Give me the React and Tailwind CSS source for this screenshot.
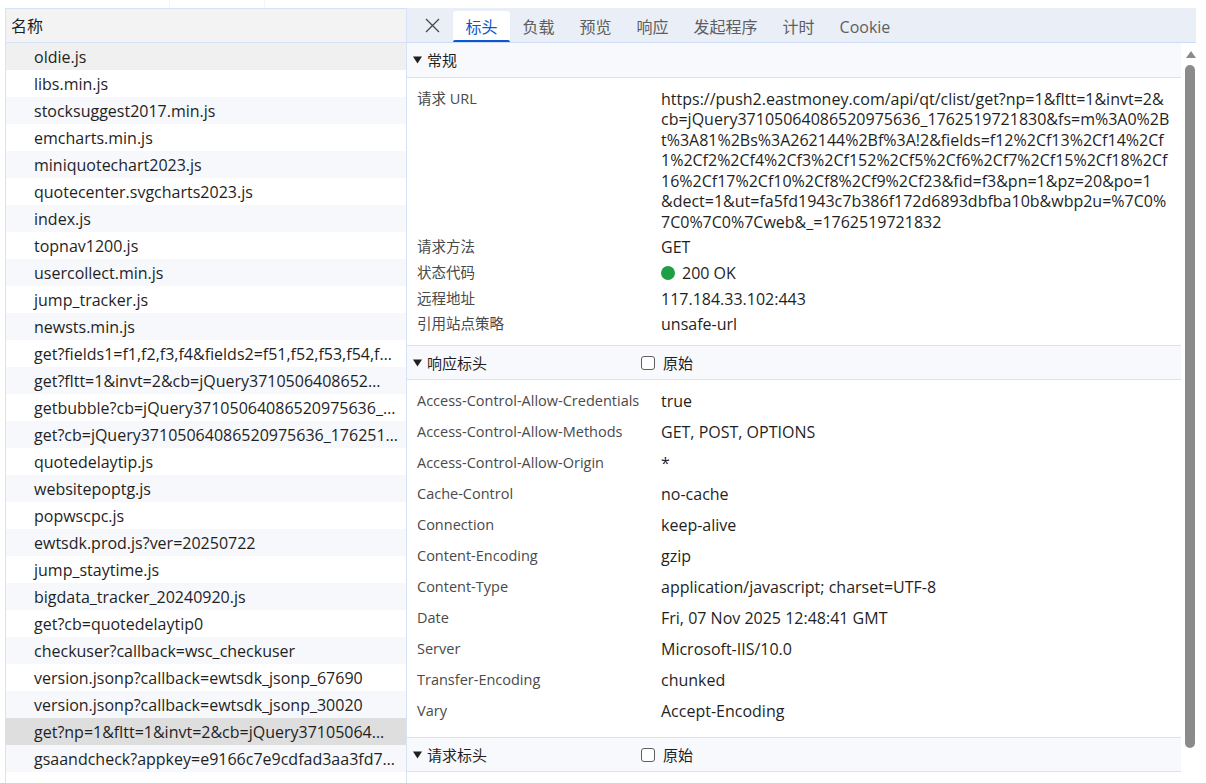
const files = [
  "oldie.js",
  "libs.min.js",
  "stocksuggest2017.min.js",
  "emcharts.min.js",
  "miniquotechart2023.js",
  "quotecenter.svgcharts2023.js",
  "index.js",
  "topnav1200.js",
  "usercollect.min.js",
  "jump_tracker.js",
  "newsts.min.js",
  "get?fields1=f1,f2,f3,f4&fields2=f51,f52,f53,f54,f…",
  "get?fltt=1&invt=2&cb=jQuery3710506408652…",
  "getbubble?cb=jQuery37105064086520975636_…",
  "get?cb=jQuery37105064086520975636_176251…",
  "quotedelaytip.js",
  "websitepoptg.js",
  "popwscpc.js",
  "ewtsdk.prod.js?ver=20250722",
  "jump_staytime.js",
  "bigdata_tracker_20240920.js",
  "get?cb=quotedelaytip0",
  "checkuser?callback=wsc_checkuser",
  "version.jsonp?callback=ewtsdk_jsonp_67690",
  "version.jsonp?callback=ewtsdk_jsonp_30020",
  "get?np=1&fltt=1&invt=2&cb=jQuery37105064…",
  "gsaandcheck?appkey=e9166c7e9cdfad3aa3fd7…",
];

const urlLines = [
  "https://push2.eastmoney.com/api/qt/clist/get?np=1&fltt=1&invt=2&",
  "cb=jQuery37105064086520975636_1762519721830&fs=m%3A0%2B",
  "t%3A81%2Bs%3A262144%2Bf%3A!2&fields=f12%2Cf13%2Cf14%2Cf",
  "1%2Cf2%2Cf4%2Cf3%2Cf152%2Cf5%2Cf6%2Cf7%2Cf15%2Cf18%2Cf",
  "16%2Cf17%2Cf10%2Cf8%2Cf9%2Cf23&fid=f3&pn=1&pz=20&po=1",
  "&dect=1&ut=fa5fd1943c7b386f172d6893dbfba10b&wbp2u=%7C0%",
  "7C0%7C0%7Cweb&_=1762519721832",
];

const respHeaders = [
  ["Access-Control-Allow-Credentials", "true"],
  ["Access-Control-Allow-Methods", "GET, POST, OPTIONS"],
  ["Access-Control-Allow-Origin", "*"],
  ["Cache-Control", "no-cache"],
  ["Connection", "keep-alive"],
  ["Content-Encoding", "gzip"],
  ["Content-Type", "application/javascript; charset=UTF-8"],
  ["Date", "Fri, 07 Nov 2025 12:48:41 GMT"],
  ["Server", "Microsoft-IIS/10.0"],
  ["Transfer-Encoding", "chunked"],
  ["Vary", "Accept-Encoding"],
];

const tabs = ["负载", "预览", "响应", "发起程序", "计时", "Cookie"];

function Tri() {
  return (
    <svg width="9" height="8" viewBox="0 0 9 8" className="shrink-0">
      <polygon points="0,0.5 9,0.5 4.5,7.5" fill="#1f1f1f" />
    </svg>
  );
}

function SectionHeader({ title, raw, top }) {
  return (
    <div
      className={
        "h-[35px] shrink-0 bg-[#f8f9fd] border-b border-[#d6e2f8] flex items-center pl-[6px] text-[15px] text-[#1f1f1f] " +
        (top ? "border-t" : "")
      }
    >
      <div className="w-[228px] flex items-center gap-[5px]">
        <Tri />
        <span>{title}</span>
      </div>
      {raw && (
        <div className="flex items-center gap-[8px]">
          <div className="w-[14px] h-[14px] shrink-0 border border-[#5f5f5f] rounded-[3px] bg-white" />
          <span>原始</span>
        </div>
      )}
    </div>
  );
}

export default function App() {
  return (
    <div className="w-[1206px] h-[783px] bg-white overflow-hidden flex flex-col font-['Open_Sans','Noto_Sans_CJK_SC',sans-serif] text-[#1f1f1f]">
      <div className="h-[8px] shrink-0 flex">
        <div className="w-[5px]" />
        <div className="w-[165px] border-r border-[#f3f6fc]" />
        <div className="w-[95px] border-r border-[#f3f6fc]" />
        <div className="flex-1" />
      </div>
      <div className="flex-1 flex min-h-0">
        <div className="w-[5px] shrink-0" />
        {/* left panel */}
        <div className="w-[402px] shrink-0 flex flex-col border-l border-t border-r border-[#d6e2f8] overflow-hidden">
          <div className="h-[34px] shrink-0 bg-[#f3f3f3] border-b border-[#d6e2f8] flex items-center pl-[5px] text-[16px]">
            名称
          </div>
          {files.map((f, i) => {
            let bg = i % 2 === 0 ? "bg-[#f6f8fc]" : "bg-white";
            if (i === 0) bg = "bg-[#f0f0f0]";
            if (i === 25) bg = "bg-[#dedede]";
            return (
              <div
                key={i}
                className={"h-[27px] shrink-0 flex items-center pl-[28px] pr-[4px] text-[16px] whitespace-nowrap overflow-hidden " + bg}
              >
                {f}
              </div>
            );
          })}
        </div>
        {/* right panel */}
        <div className="w-[789px] shrink-0 flex flex-col">
          <div className="h-[35px] shrink-0 bg-[#e9eef7] border-b border-[#cfdcf6] flex items-end">
            <div className="w-[46px] h-full flex items-center pl-[18px]">
              <svg width="15" height="15" viewBox="0 0 15 15">
                <path d="M1 1L14 14M14 1L1 14" stroke="#474747" strokeWidth="1.3" />
              </svg>
            </div>
            <div className="h-[31px] px-[12.5px] bg-white rounded-t-[3px] flex items-center relative text-[16px] text-[#0b57d0]">
              标头
              <span className="absolute left-0 right-0 bottom-0 h-[2px] bg-[#0b57d0] rounded-t-[2px]" />
            </div>
            {tabs.map((t) => (
              <div key={t} className="h-[31px] px-[12.5px] flex items-center text-[16px] text-[#5e5e5e]">
                {t}
              </div>
            ))}
          </div>
          <div className="flex-1 flex min-h-0">
            <div className="w-[774px] shrink-0 flex flex-col">
              <SectionHeader title="常规" />
              <div className="pt-[8px] pb-[8px] pl-[10px]">
                <div className="grid grid-cols-[244px_1fr]">
                  <div className="py-[2.6px] leading-[20.5px] text-[14.5px] text-[#4a4a4a]">请求 URL</div>
                  <div className="py-[2.6px] leading-[20.5px] text-[16px]">
                    {urlLines.map((l, i) => (
                      <div key={i} className="whitespace-nowrap">{l}</div>
                    ))}
                  </div>
                  <div className="py-[2.6px] leading-[20.5px] text-[14.5px] text-[#4a4a4a]">请求方法</div>
                  <div className="py-[2.6px] leading-[20.5px] text-[16px]">GET</div>
                  <div className="py-[2.6px] leading-[20.5px] text-[14.5px] text-[#4a4a4a]">状态代码</div>
                  <div className="py-[2.6px] leading-[20.5px] text-[16px] flex items-center gap-[7px]">
                    <span className="w-[14px] h-[14px] rounded-full bg-[#1e9f44] inline-block" />
                    200 OK
                  </div>
                  <div className="py-[2.6px] leading-[20.5px] text-[14.5px] text-[#4a4a4a]">远程地址</div>
                  <div className="py-[2.6px] leading-[20.5px] text-[16px]">117.184.33.102:443</div>
                  <div className="py-[2.6px] leading-[20.5px] text-[14.5px] text-[#4a4a4a]">引用站点策略</div>
                  <div className="py-[2.6px] leading-[20.5px] text-[16px]">unsafe-url</div>
                </div>
              </div>
              <SectionHeader title="响应标头" raw top />
              <div className="pt-[5px] pb-[11px] pl-[10px]">
                {respHeaders.map(([k, v]) => (
                  <div key={k} className="h-[31px] grid grid-cols-[244px_1fr] items-center">
                    <div className="text-[14.5px] text-[#4a4a4a] whitespace-nowrap">{k}</div>
                    <div className="text-[16px] whitespace-nowrap">{v}</div>
                  </div>
                ))}
              </div>
              <SectionHeader title="请求标头" raw top />
            </div>
            {/* scrollbar */}
            <div className="w-[15px] shrink-0 flex flex-col items-start">
              <div className="h-[22px] w-full flex items-center pl-[5px]">
                <svg width="10" height="7" viewBox="0 0 10 7">
                  <polygon points="5,0 10,7 0,7" fill="#8b8b8b" />
                </svg>
              </div>
              <div className="ml-[4px] w-[10px] h-[683px] rounded-full bg-[#8b8b8b]" />
            </div>
          </div>
        </div>
        <div className="flex-1" />
      </div>
    </div>
  );
}
